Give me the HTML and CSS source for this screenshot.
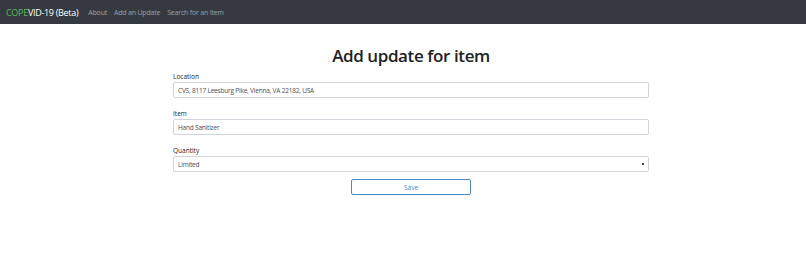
FILE: index.html
```html
<!DOCTYPE html>
<html lang="en">
<head>
  <meta charset="UTF-8">
  <title>COPEVID-19 - Add Update</title>
  <link rel="stylesheet" href="styles.css">
</head>
<body>
  <nav class="navbar">
    <span class="brand"><span class="brand-green">COPE</span>VID-19 (Beta)</span>
    <a class="nav-link" href="#">About</a>
    <a class="nav-link" href="#">Add an Update</a>
    <a class="nav-link" href="#">Search for an Item</a>
  </nav>
  <div class="page">
    <div class="container">
      <h1>Add update for item</h1>
      <form class="update-form">
        <label for="location">Location</label>
        <input class="field" type="text" id="location" value="CVS, 8117 Leesburg Pike, Vienna, VA 22182, USA">
        <label for="item">Item</label>
        <input class="field" type="text" id="item" value="Hand Sanitizer">
        <label for="quantity">Quantity</label>
        <div class="select-wrap">
          <select class="field" id="quantity">
            <option>Limited</option>
          </select>
          <span class="caret"></span>
        </div>
        <div class="actions">
          <button type="button" class="save">Save</button>
        </div>
      </form>
    </div>
  </div>
</body>
</html>
```

FILE: styles.css
```css
body {
  margin: 0;
  font-family: "Open Sans", "Noto Sans", sans-serif;
  background: #ffffff;
  color: #212529;
}
.navbar {
  display: flex;
  align-items: center;
  height: 24px;
  padding: 0 6px;
  background: #343a40;
}
.brand {
  color: #ffffff;
  font-size: 9px;
  margin-right: 10px;
  letter-spacing: -0.3px;
}
.brand-green {
  color: #5cb85c;
}
.nav-link {
  color: rgba(255, 255, 255, 0.5);
  font-size: 7px;
  letter-spacing: -0.2px;
  text-decoration: none;
  margin-right: 7px;
}
.page {
  padding-left: 16px;
}
.container {
  width: 476px;
  margin: 0 auto;
}
h1 {
  text-align: center;
  font-size: 17px;
  font-weight: 600;
  letter-spacing: -0.4px;
  line-height: 20px;
  margin: 22px 0 6px;
  color: #222;
}
.update-form {
  display: flex;
  flex-direction: column;
}
label {
  font-size: 6.5px;
  line-height: 9px;
  color: #212529;
  margin-bottom: 1px;
}
.field {
  box-sizing: border-box;
  width: 100%;
  height: 16px;
  padding: 0 4px;
  font-family: inherit;
  font-size: 6.5px;
  letter-spacing: -0.2px;
  color: #495057;
  background: #fff;
  border: 1px solid #ced4da;
  border-radius: 2px;
  margin: 0 0 11px;
}
.select-wrap {
  position: relative;
  display: flex;
  margin-bottom: 7px;
}
select.field {
  appearance: none;
  margin: 0;
}
.caret {
  position: absolute;
  right: 5px;
  top: 7px;
  width: 2px;
  height: 2px;
  background: #444;
}
.actions {
  display: flex;
  justify-content: center;
}
.save {
  width: 120px;
  height: 16px;
  padding: 0;
  font-family: inherit;
  font-size: 6.5px;
  color: #4a8ac4;
  background: #fff;
  border: 1px solid #4a8ac4;
  border-radius: 2px;
}
```
